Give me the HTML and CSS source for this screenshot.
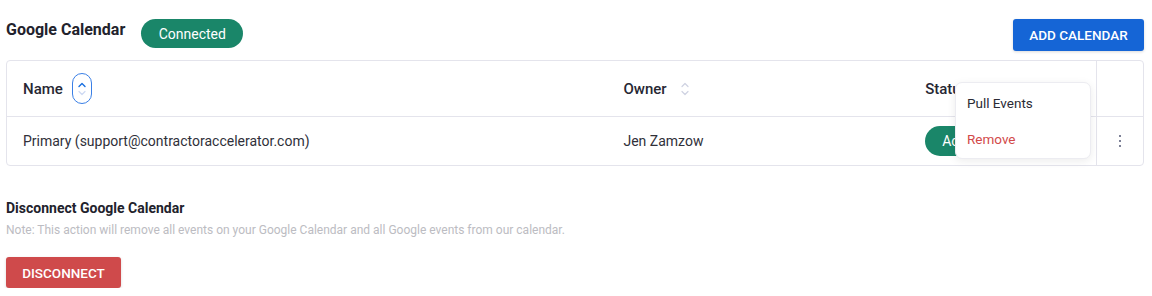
FILE: index.html
```html
<!DOCTYPE html>
<html>
<head>
<meta charset="utf-8">
<link rel="stylesheet" href="styles.css">
</head>
<body>
<div class="page">
  <div class="topbar">
    <div class="title-wrap">
      <h2 class="title">Google Calendar</h2>
      <span class="pill pill-connected">Connected</span>
    </div>
    <button class="btn btn-blue">ADD CALENDAR</button>
  </div>
  <div class="table">
    <div class="row head">
      <div class="cell c-name">Name
        <span class="sort active">
          <svg width="8" height="20" viewBox="0 0 8 20"><path d="M1 7.5 L4 4.5 L7 7.5" fill="none" stroke="#1a6fe0" stroke-width="1.4" stroke-linecap="round" stroke-linejoin="round"/><path d="M1 12.5 L4 15.5 L7 12.5" fill="none" stroke="#cdd9f3" stroke-width="1.2" stroke-linecap="round" stroke-linejoin="round"/></svg>
        </span>
      </div>
      <div class="cell c-owner">Owner
        <span class="sort">
          <svg width="8" height="20" viewBox="0 0 8 20"><path d="M1 7.5 L4 4.5 L7 7.5" fill="none" stroke="#cfd2e2" stroke-width="1.2" stroke-linecap="round" stroke-linejoin="round"/><path d="M1 12.5 L4 15.5 L7 12.5" fill="none" stroke="#cfd2e2" stroke-width="1.2" stroke-linecap="round" stroke-linejoin="round"/></svg>
        </span>
      </div>
      <div class="cell c-status">Status</div>
      <div class="cell c-act"></div>
    </div>
    <div class="row body">
      <div class="cell c-name">Primary (support@contractoraccelerator.com)</div>
      <div class="cell c-owner">Jen Zamzow</div>
      <div class="cell c-status"><span class="pill pill-active">Active</span></div>
      <div class="cell c-act"><span class="kebab"><i></i><i></i><i></i></span></div>
    </div>
    <div class="menu">
      <div class="menu-item">Pull Events</div>
      <div class="menu-item danger">Remove</div>
    </div>
  </div>
  <div class="disconnect">
    <h3 class="d-title">Disconnect Google Calendar</h3>
    <p class="note">Note: This action will remove all events on your Google Calendar and all Google events from our calendar.</p>
    <button class="btn btn-red">DISCONNECT</button>
  </div>
</div>
</body>
</html>
```
FILE: styles.css
```css
* { box-sizing: border-box; }
html, body { margin: 0; padding: 0; background: #fff; }
body { font-family: Roboto, "Liberation Sans", sans-serif; color: #262633; }
.page { padding: 19px 8px 0 6px; }
.topbar { display: flex; justify-content: space-between; align-items: flex-start; height: 41px; }
.title-wrap { display: flex; align-items: flex-start; gap: 16px; }
.title { margin: 0; font-size: 16px; font-weight: 700; line-height: 20px; padding-top: 1px; color: #22222c; }
.pill { display: inline-flex; align-items: center; justify-content: center; border-radius: 15px; background: #1a8669; color: #fff; font-size: 14px; }
.pill-connected { width: 102px; height: 29px; }
.pill-active { width: 70px; height: 30px; justify-content: flex-start; padding-left: 17px; }
.btn { border: none; border-radius: 3px; color: #fff; font-family: Roboto, "Liberation Sans", sans-serif; font-weight: 500; font-size: 13.5px; letter-spacing: 0; cursor: pointer; box-shadow: 0 1px 3px rgba(0,0,0,0.15); }
.btn-blue { background: #1565d6; width: 131px; height: 32px; }
.btn-red { background: #cf4a4b; width: 115px; height: 31px; }
.table { position: relative; border: 1px solid #e4e4ec; border-radius: 4px; width: 1138px; }
.row { display: flex; }
.row.head { height: 56px; border-bottom: 1px solid #e4e4ec; }
.row.body { height: 48px; }
.cell { display: flex; align-items: center; font-size: 14px; }
.head .cell { font-size: 15px; font-weight: 500; color: #272733; }
.body .cell { color: #30303a; }
.c-name { width: 600px; padding-left: 16px; }
.c-owner { width: 301px; padding-left: 17px; }
.c-status { width: 189px; padding-left: 18px; }
.c-act { width: 47px; border-left: 1px solid #e4e4ec; justify-content: center; }
.sort { display: inline-flex; align-items: center; justify-content: center; margin-left: 9px; }
.sort.active { width: 20px; height: 31px; border: 1px solid #3a7fe6; border-radius: 10px; }
.c-owner .sort { margin-left: 14px; }
.kebab { display: flex; flex-direction: column; gap: 3px; }
.kebab i { width: 2px; height: 2px; background: #7d8197; display: block; }
.menu { position: absolute; left: 948px; top: 21px; width: 136px; height: 77px; background: #fff; border: 1px solid #ececf1; border-radius: 7px; box-shadow: 0 2px 8px rgba(0,0,0,0.08); padding-top: 4px; }
.menu-item { height: 36px; line-height: 32px; padding-left: 11px; font-size: 13.5px; color: #2b2b35; }
.menu-item.danger { color: #d24a4a; }
.disconnect { padding-top: 34px; }
.d-title { margin: 0; font-size: 14px; font-weight: 700; line-height: 17px; color: #22222c; }
.note { margin: 6px 0 20px; font-size: 12px; color: #bcbcc2; line-height: 14px; }
```
